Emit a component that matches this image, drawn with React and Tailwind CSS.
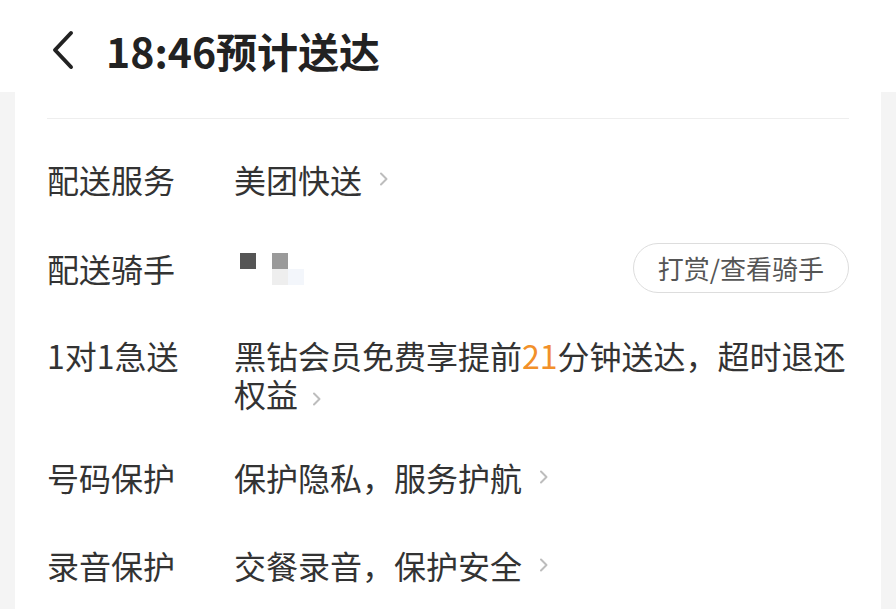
const Chevron = ({ className = "" }) => (
  <svg viewBox="0 0 10 14" className={`w-[10px] h-[14px] shrink-0 ${className}`} fill="none">
    <path d="M2 1.5 L7.5 7 L2 12.5" stroke="#bdbdbd" strokeWidth="2" strokeLinecap="round" strokeLinejoin="round" />
  </svg>
);

const Row = ({ label, children, className = "py-[25px] items-start" }) => (
  <div className={`flex ${className}`}>
    <div className="w-[187px] shrink-0 text-[#333333]">{label}</div>
    <div className="flex-1 min-w-0 text-[#333333]">{children}</div>
  </div>
);

export default function App() {
  return (
    <div
      className="min-h-screen bg-[#f4f4f4] text-[32px] leading-[38px]"
      style={{ fontFamily: '"Noto Sans CJK SC", "Noto Sans", sans-serif' }}
    >
      {/* Header */}
      <header className="h-[92px] bg-white flex items-center pl-[51px] pt-[8px]">
        <svg viewBox="0 0 24 40" className="w-[24px] h-[40px]" fill="none">
          <path d="M20 3 L4 20 L20 37" stroke="#222222" strokeWidth="4" strokeLinecap="round" strokeLinejoin="round" />
        </svg>
        <h1 className="ml-[31px] text-[41px] leading-[48px] font-bold text-[#222222]">18:46预计送达</h1>
      </header>

      {/* Card */}
      <div className="mx-[15px] bg-white px-[32px]">
        <div className="h-[27px] border-b border-[#eeeeee]" />
        <div className="pt-[16px] pb-[10px]">
          <Row label="配送服务">
            <span className="inline-flex items-center">
              美团快送
              <Chevron className="ml-[17px]" />
            </span>
          </Row>

          <Row label="配送骑手" className="pt-[20px] pb-[18px] items-center">
            <div className="flex items-center">
              <div className="ml-[6px] mt-[2px] grid grid-cols-[16px_16px_16px_16px] grid-rows-[16px_16px]">
                <div className="bg-[#555555]" />
                <div />
                <div className="bg-[#9a9a9a]" />
                <div />
                <div />
                <div />
                <div className="bg-[#eeeeee]" />
                <div className="bg-[#f3f6fb]" />
              </div>
              <button className="ml-auto h-[50px] px-[24px] rounded-full border border-[#dddddd] text-[26px] leading-[30px] text-[#555555]">
                打赏/查看骑手
              </button>
            </div>
          </Row>

          <Row label="1对1急送" className="pt-[25px] pb-[21px] items-start">
            <span>
              黑钻会员免费享提前<span className="text-[#f2902a]">21</span>分钟送达，超时退还权益
              <Chevron className="inline-block ml-[14px] align-[1px]" />
            </span>
          </Row>

          <Row label="号码保护">
            <span className="inline-flex items-center">
              保护隐私，服务护航
              <Chevron className="ml-[17px]" />
            </span>
          </Row>

          <Row label="录音保护">
            <span className="inline-flex items-center">
              交餐录音，保护安全
              <Chevron className="ml-[17px]" />
            </span>
          </Row>
        </div>
      </div>
    </div>
  );
}
